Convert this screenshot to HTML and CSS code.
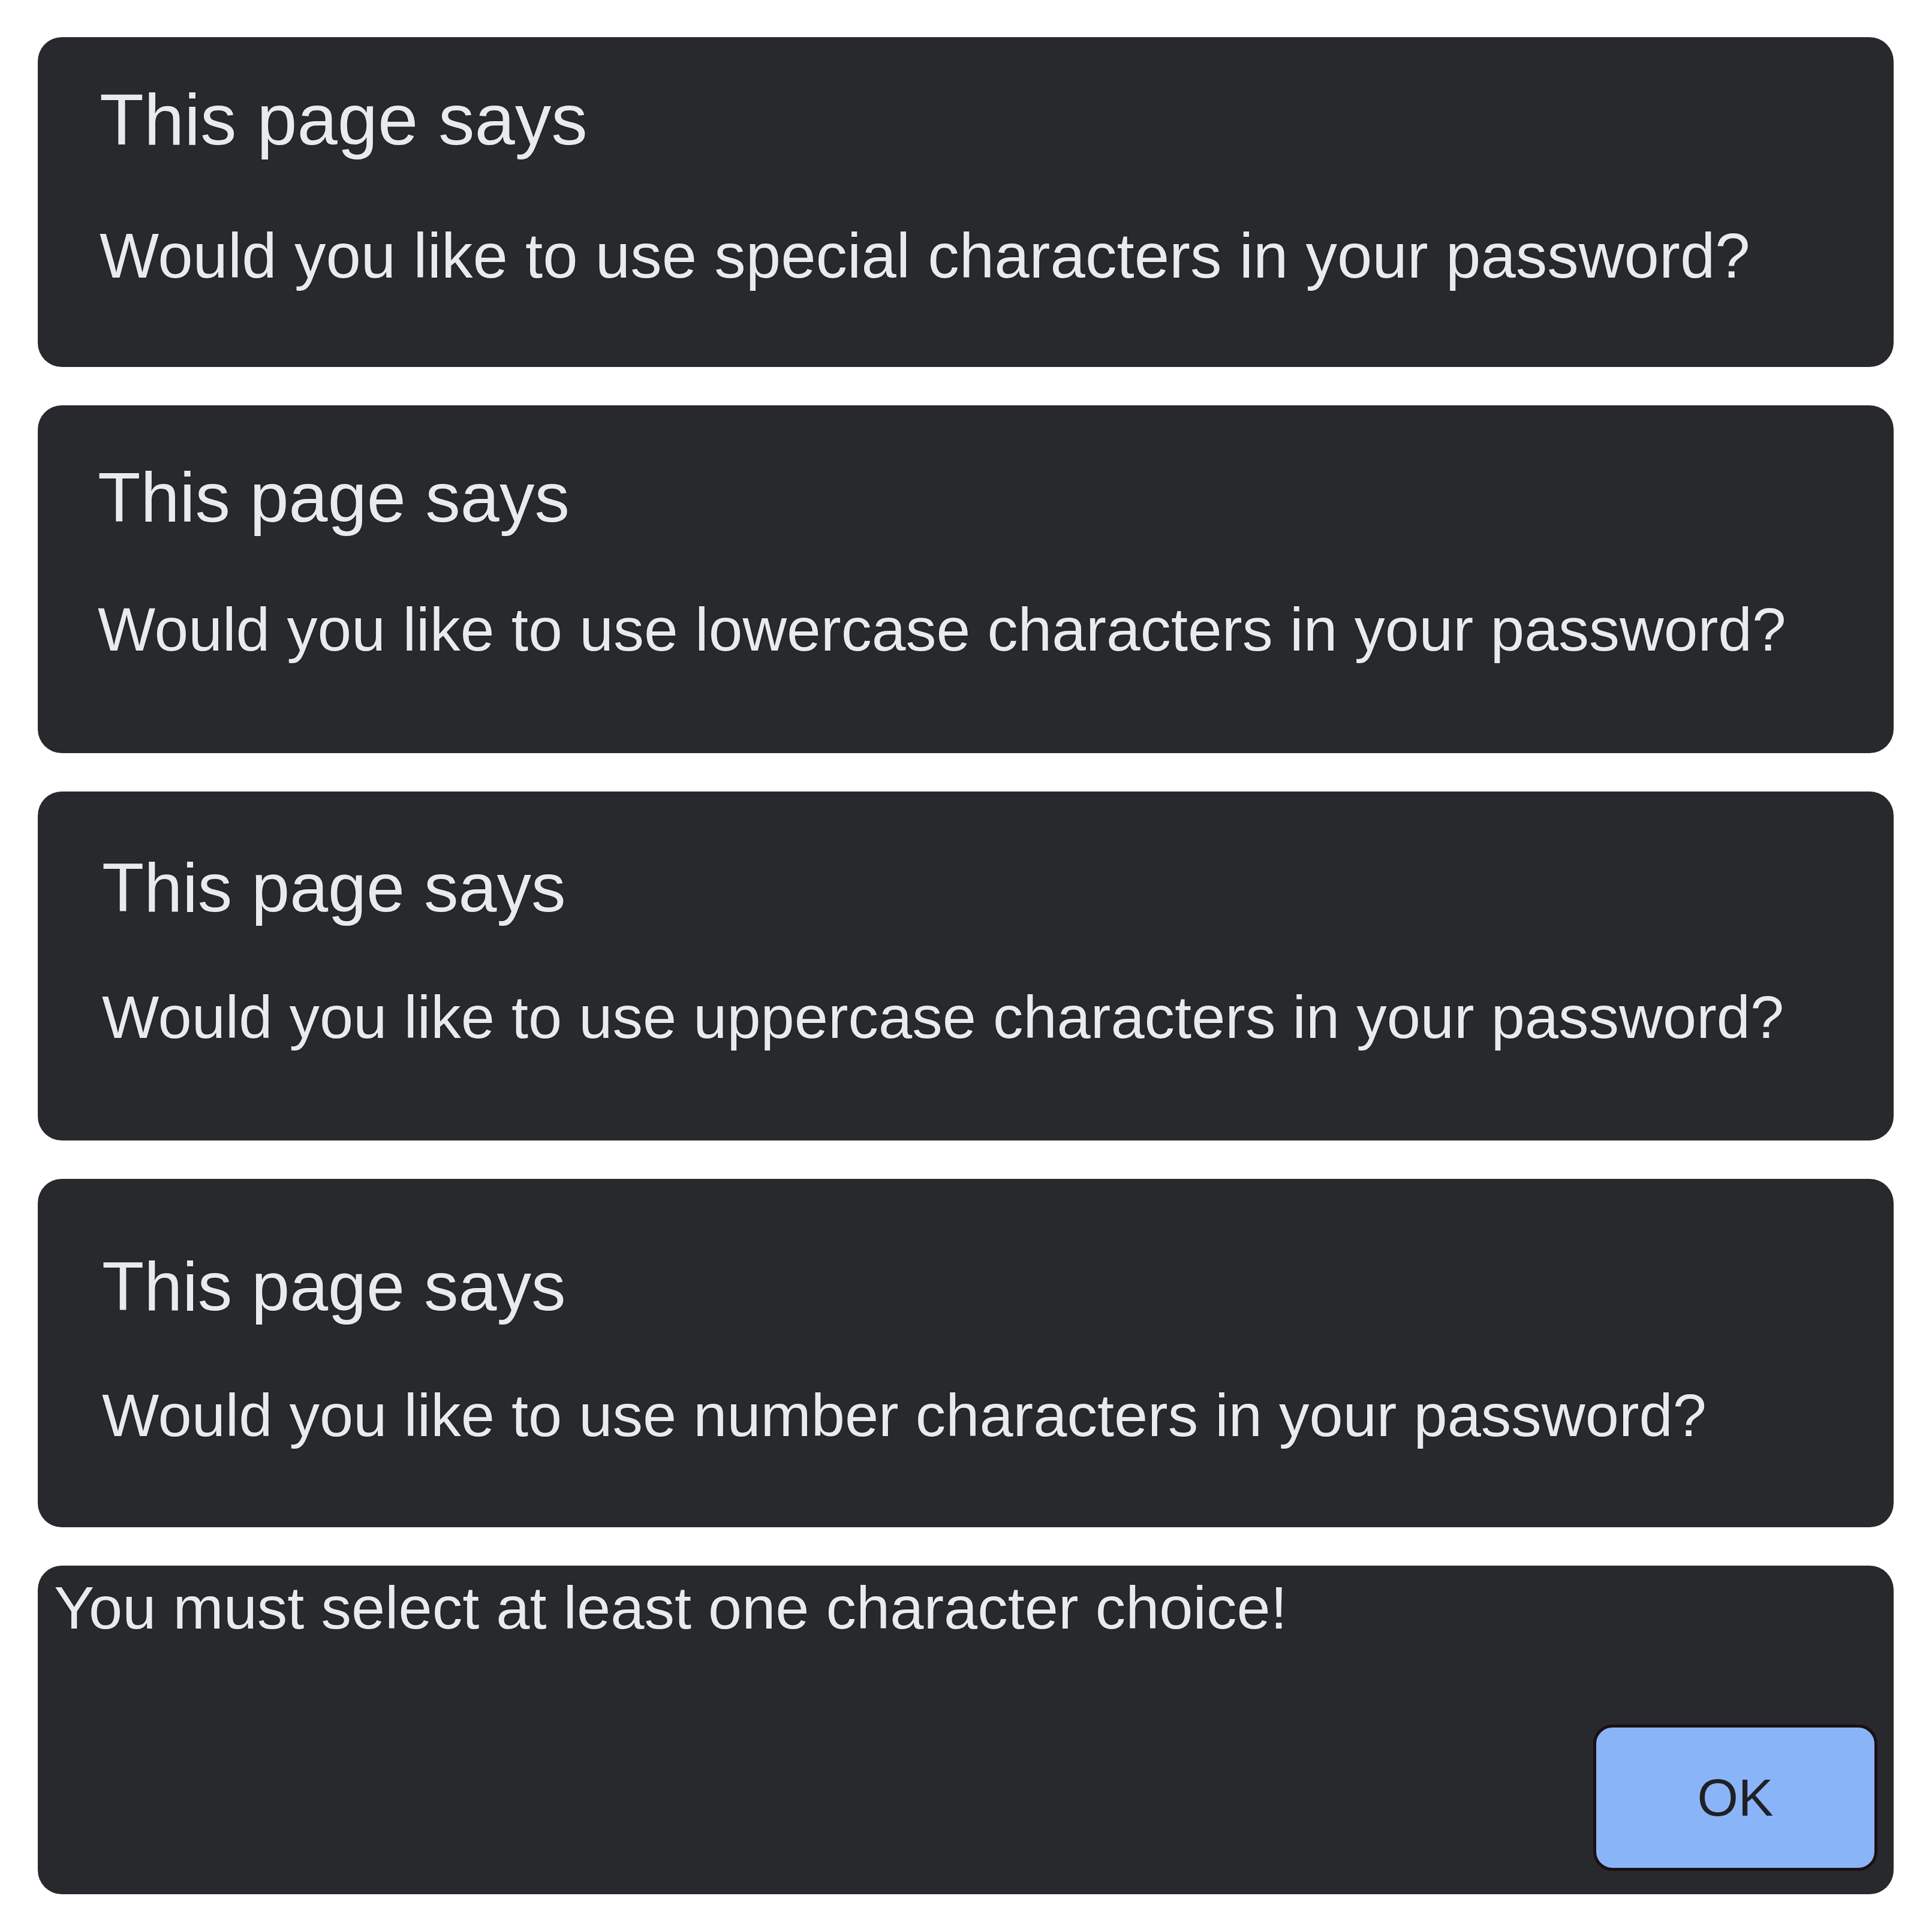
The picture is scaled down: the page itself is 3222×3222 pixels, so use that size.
FILE: index.html
```html
<!DOCTYPE html>
<html lang="en">
<head>
<meta charset="utf-8">
<title>Alerts</title>
<link rel="stylesheet" href="styles.css">
</head>
<body>
  <main class="stack">
    <section class="dialog dialog--special">
      <h2 class="dialog__title">This page says</h2>
      <p class="dialog__msg">Would you like to use special characters in your password?</p>
    </section>
    <section class="dialog dialog--lower">
      <h2 class="dialog__title">This page says</h2>
      <p class="dialog__msg">Would you like to use lowercase characters in your password?</p>
    </section>
    <section class="dialog dialog--upper">
      <h2 class="dialog__title">This page says</h2>
      <p class="dialog__msg">Would you like to use uppercase characters in your password?</p>
    </section>
    <section class="dialog dialog--number">
      <h2 class="dialog__title">This page says</h2>
      <p class="dialog__msg">Would you like to use number characters in your password?</p>
    </section>
    <section class="dialog dialog--alert">
      <p class="dialog__msg">You must select at least one character choice!</p>
      <button class="dialog__ok" type="button">OK</button>
    </section>
  </main>
</body>
</html>
```

FILE: styles.css
```css
* {
  box-sizing: border-box;
}

html, body {
  margin: 0;
  background: #ffffff;
}

body {
  font-family: "Liberation Sans", Arial, Helvetica, sans-serif;
  color: #e8eaed;
}

.stack {
  display: flex;
  flex-direction: column;
  gap: 64px;
  padding: 62px 64px 64px 63px;
}

.dialog {
  background: #28292d;
  border-radius: 40px;
  display: flex;
  flex-direction: column;
}

.dialog__title,
.dialog__msg {
  margin: 0;
  font-weight: 400;
  line-height: 1.15;
  white-space: nowrap;
  text-shadow: 0 0 2px rgba(0, 0, 0, 0.9);
}

/* panel 1 */
.dialog--special {
  height: 550px;
  padding: 68px 0 0 103px;
}
.dialog--special .dialog__title { font-size: 121px; }
.dialog--special .dialog__msg { font-size: 105px; margin-top: 98px; }

/* panel 2 */
.dialog--lower {
  height: 580px;
  padding: 87px 0 0 100px;
}
.dialog--lower .dialog__title { font-size: 117px; }
.dialog--lower .dialog__msg { font-size: 102px; margin-top: 94px; }

/* panel 3 */
.dialog--upper {
  height: 582px;
  padding: 94px 0 0 107px;
}
.dialog--upper .dialog__title { font-size: 115px; }
.dialog--upper .dialog__msg { font-size: 101px; margin-top: 92px; }

/* panel 4 */
.dialog--number {
  height: 581px;
  padding: 113px 0 0 107px;
}
.dialog--number .dialog__title { font-size: 115px; }
.dialog--number .dialog__msg { font-size: 101px; margin-top: 91px; }

/* panel 5 */
.dialog--alert {
  height: 548px;
  padding: 12px 27px 39px 27px;
}
.dialog--alert .dialog__msg { font-size: 101px; }

.dialog__ok {
  margin-top: auto;
  align-self: flex-end;
  width: 474px;
  height: 244px;
  border: 5px solid #1c1012;
  border-radius: 32px;
  background: #8ab4f8;
  color: #202124;
  font-family: "Liberation Sans", Arial, sans-serif;
  font-size: 88px;
  font-weight: 400;
  padding: 0;
}
```
